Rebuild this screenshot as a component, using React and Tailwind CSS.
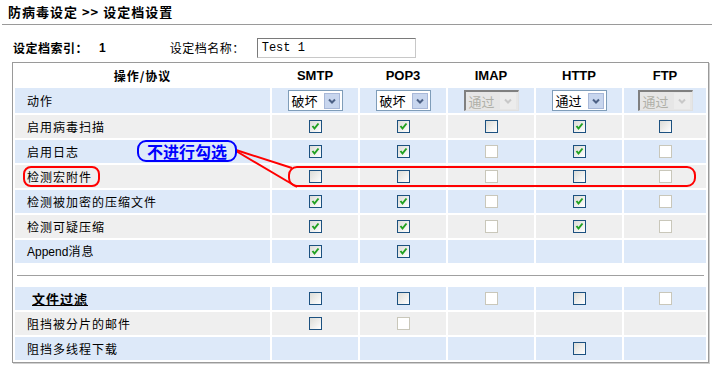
import React from "react"

const cjk = { fontFamily: '"Noto Sans CJK SC", "Liberation Sans", sans-serif' }
const latin = { fontFamily: '"Liberation Sans", "Noto Sans CJK SC", sans-serif' }

const cols = "grid grid-cols-[255px_86px_86px_86px_86px_82px] gap-x-[2px]"
const blue = "bg-[#dde9f9]"
const gray = "bg-[#efefef]"

// c = checked, u = unchecked, d = disabled, null = empty cell
const rows = [
  { label: "启用病毒扫描", cells: ["c", "c", "u", "c", "u"] },
  { label: "启用日志", cells: ["c", "c", "d", "c", "d"] },
  { label: "检测宏附件", cells: ["u", "u", "d", "u", "d"] },
  { label: "检测被加密的压缩文件", cells: ["c", "c", "d", "c", "d"] },
  { label: "检测可疑压缩", cells: ["c", "c", "d", "c", "d"] },
  { label: "Append消息", cells: ["c", "c", null, null, null] },
]

const rows2 = [
  { label: "文件过滤", bold: true, cells: ["u", "u", "d", "u", "d"] },
  { label: "阻挡被分片的邮件", cells: ["u", "d", null, null, null] },
  { label: "阻挡多线程下载", cells: [null, null, null, "u", null] },
]

const Box = ({ kind }) => {
  if (!kind) return null
  if (kind === "d") {
    return <span className="block w-[13px] h-[13px] border border-[#c9c7ba] bg-white" />
  }
  return (
    <span className="relative block w-[13px] h-[13px] border border-[#1c5180] bg-gradient-to-br from-[#dcdcd7] to-white">
      {kind === "c" && (
        <svg width="11" height="11" viewBox="0 0 11 11" className="absolute left-0 top-0">
          <path d="M2.5 5 L4.5 7.5 L8.5 2.5" stroke="#21a121" strokeWidth="2" fill="none" />
        </svg>
      )}
    </span>
  )
}

const Select = ({ value, disabled }) => (
  <div
    className={`flex items-center justify-between w-[55px] h-[21px] pl-[3px] pr-[2px] text-[13px] leading-none ${
      disabled
        ? "bg-[#e6e6e6] border-t-2 border-l-2 border-r border-b border-t-[#808080] border-l-[#808080] border-r-[#e0e0e0] border-b-[#e0e0e0] text-[#b0b0a8]"
        : "bg-white border border-[#7f9db9] text-black"
    }`}
    style={cjk}
  >
    <span>{value}</span>
    <span
      className={`flex items-center justify-center w-[16px] h-[16px] ${
        disabled ? "bg-[#ececec]" : "bg-[#c8d6ee] border border-[#a8b8d8]"
      }`}
    >
      <svg width="8" height="6" viewBox="0 0 8 6">
        <path d="M1 1.5 L4 4.5 L7 1.5" stroke={disabled ? "#c8c8c8" : "#4d6185"} strokeWidth="2" fill="none" />
      </svg>
    </span>
  </div>
)

const Row = ({ label, bold, cells, bg }) => (
  <div className={`${cols} h-[23px]`}>
    <div className={`${bg} flex items-center pl-[12px] text-[12px] tracking-[1px] text-black`} style={cjk}>
      {bold ? (
        <span className="pl-[5px] font-bold underline text-[13px]">{label}</span>
      ) : label.startsWith("Append") ? (
        <span>
          <span style={latin} className="tracking-normal">Append</span>消息
        </span>
      ) : (
        label
      )}
    </div>
    {cells.map((c, i) => (
      <div key={i} className={`${bg} flex items-center justify-center`}>
        <Box kind={c} />
      </div>
    ))}
  </div>
)

export default function App() {
  return (
    <div className="relative w-[717px] h-[365px] bg-white overflow-hidden text-black">
      <div className="pt-[2px] pl-[8px] h-[24px] text-[13px] font-bold tracking-[1px]" style={cjk}>
        防病毒设定 &gt;&gt; 设定档设置
      </div>
      <div className="ml-[2px] w-[710px] h-px bg-[#9a9a9a]" />

      <div className="mt-[13px] h-[20px] flex items-center text-[12px]" style={cjk}>
        <span className="ml-[13px] font-bold tracking-[0.5px]">设定档索引：</span>
        <span className="ml-[11px] font-bold" style={latin}>1</span>
        <span className="ml-[64px] tracking-[0.5px]">设定档名称：</span>
        <div
          className="ml-[12px] w-[159px] h-[20px] flex items-center pl-[4px] border border-t-[#7a7a7a] border-l-[#7a7a7a] border-r-[#c8c8c8] border-b-[#c8c8c8] text-[12px]"
          style={{ fontFamily: '"Liberation Mono", monospace' }}
        >
          Test 1
        </div>
      </div>

      <div className="mt-[4px] ml-[12px] w-fit border border-[#9a9a9a] shadow-[1px_1px_0_#d0d0d0] p-[2px] flex flex-col gap-y-[2px]">
        <div className={`${cols} h-[21px] text-[12px] font-bold`}>
          <div className="flex items-center justify-center tracking-[1px]" style={cjk}>操作/协议</div>
          {["SMTP", "POP3", "IMAP", "HTTP", "FTP"].map(p => (
            <div key={p} className="flex items-center justify-center text-[13px]" style={latin}>{p}</div>
          ))}
        </div>

        <div className={`${cols} h-[25px]`}>
          <div className={`${blue} flex items-center pl-[12px] text-[12px] tracking-[1px]`} style={cjk}>动作</div>
          <div className={`${blue} flex items-center justify-center`}><Select value="破坏" /></div>
          <div className={`${blue} flex items-center justify-center`}><Select value="破坏" /></div>
          <div className={`${blue} flex items-center justify-center`}><Select value="通过" disabled /></div>
          <div className={`${blue} flex items-center justify-center`}><Select value="通过" /></div>
          <div className={`${blue} flex items-center justify-center`}><Select value="通过" disabled /></div>
        </div>

        {rows.map((r, i) => (
          <Row key={r.label} {...r} bg={i % 2 === 0 ? gray : blue} />
        ))}

        <div className="h-[20px] flex items-center px-[2px]">
          <div className="w-full h-px bg-[#a0a0a0]" />
        </div>

        {rows2.map((r, i) => (
          <Row key={r.label} {...r} bg={i % 2 === 0 ? blue : gray} />
        ))}
      </div>

      {/* annotations */}
      <div className="absolute left-[23px] top-[166px] w-[77px] h-[21px] border-2 border-[#ff0000] rounded-[8px]" />
      <div className="absolute left-[288px] top-[166px] w-[408px] h-[21px] border-2 border-[#ff0000] rounded-[9px]" />
      <svg className="absolute left-0 top-0" width="717" height="365">
        <line x1="236" y1="150" x2="292" y2="168" stroke="#ff0000" strokeWidth="2" />
        <line x1="236" y1="151" x2="297" y2="187" stroke="#ff0000" strokeWidth="2" />
      </svg>
      <div
        className="absolute left-[137px] top-[140px] w-[100px] h-[22px] border-2 border-[#0000ff] rounded-[9px] flex items-center justify-center text-[16px] font-bold text-[#0000ff] leading-none"
        style={cjk}
      >
        不进行勾选
      </div>
    </div>
  )
}
